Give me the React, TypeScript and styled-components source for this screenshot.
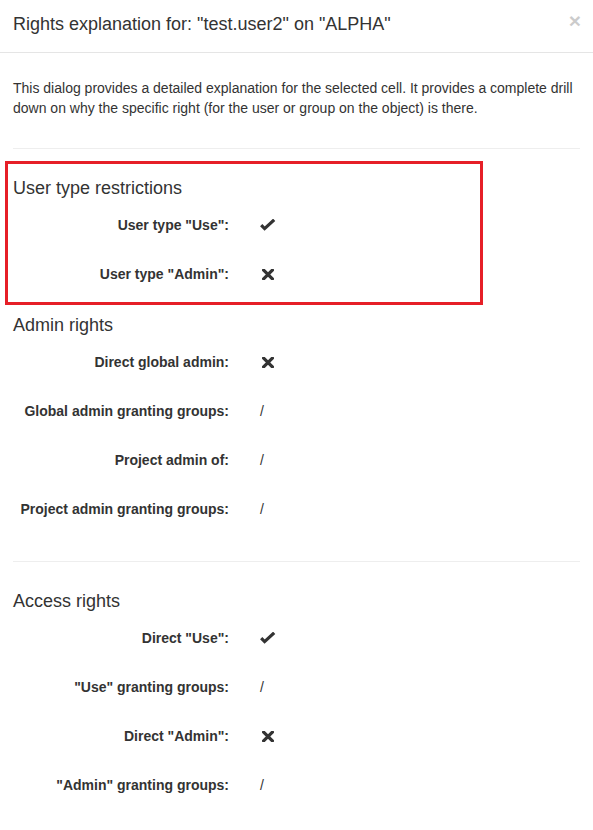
import React from "react";
import styled, { createGlobalStyle } from "styled-components";

const GlobalStyle = createGlobalStyle`
    body {
        margin: 0;
        background: #fff;
        color: #333;
        font-family: "Liberation Sans", Arial, Helvetica, sans-serif;
        font-size: 14px;
        line-height: 20px;
    }
`;

const Modal = styled.div`
    width: 593px;
`;

const Header = styled.header`
    display: flex;
    justify-content: space-between;
    align-items: flex-start;
    padding: 11px 13px 15px 13px;
    border-bottom: 1px solid #e5e5e5;
`;

const Title = styled.h4`
    margin: 0;
    font-size: 18px;
    font-weight: 500;
    line-height: 26px;
`;

const Close = styled.button`
    margin-top: -1px;
    margin-right: -1px;
    padding: 0;
    border: 0;
    background: transparent;
    color: #000;
    opacity: 0.2;
    font-family: "Liberation Sans", Arial, sans-serif;
    font-size: 21px;
    font-weight: bold;
    line-height: 21px;
    cursor: pointer;
`;

const Body = styled.div`
    display: flex;
    flex-direction: column;
    padding: 25px 13px 0 13px;
`;

const Intro = styled.p`
    margin: 0 0 10px;
`;

const Divider = styled.hr`
    width: 100%;
    margin: 20px 0;
    border: 0;
    border-top: 1px solid #eee;
`;

const Section = styled.section<{ $highlight?: boolean }>`
    position: relative;
    display: flex;
    flex-direction: column;
    padding-top: 9px;

    ${({ $highlight }) =>
        $highlight &&
        `
        &::after {
            content: "";
            position: absolute;
            top: -8px;
            left: -8px;
            right: 97px;
            bottom: 1px;
            border: 3px solid #e61f27;
            pointer-events: none;
        }
    `}
`;

const SectionTitle = styled.h4`
    margin: 0 0 10px;
    font-size: 18px;
    font-weight: 500;
    line-height: 20px;
`;

const Row = styled.div`
    display: grid;
    grid-template-columns: 231px 1fr;
    min-height: 34px;
    margin-bottom: 15px;
`;

const Label = styled.label`
    padding: 7px 15px 0 0;
    text-align: right;
    font-weight: bold;
`;

const Value = styled.div`
    display: flex;
    align-items: center;
    height: 20px;
    padding: 7px 0 0 16px;
`;

const Glyph = styled.svg`
    display: block;
    fill: none;
    stroke: #333;
`;

const CheckIcon = () => (
    <Glyph width="16" height="12" viewBox="0 0 16 12">
        <polyline points="1.2,6.2 4.6,9.6 14.2,0.8" strokeWidth="3.2" strokeLinejoin="miter" />
    </Glyph>
);

const CrossIcon = () => (
    <Glyph width="12" height="11" viewBox="0 0 12 11" style={{ marginLeft: 2 }}>
        <path d="M1.6 1.1 L10.4 9.9 M10.4 1.1 L1.6 9.9" strokeWidth="3.2" strokeLinecap="square" />
    </Glyph>
);

type Right = "yes" | "no" | "none";

interface Item {
    label: string;
    value: Right;
}

interface Group {
    title: string;
    items: Item[];
    highlight?: boolean;
    divider?: boolean;
}

const groups: Group[] = [
    {
        title: "User type restrictions",
        highlight: true,
        items: [
            { label: 'User type "Use":', value: "yes" },
            { label: 'User type "Admin":', value: "no" },
        ],
    },
    {
        title: "Admin rights",
        items: [
            { label: "Direct global admin:", value: "no" },
            { label: "Global admin granting groups:", value: "none" },
            { label: "Project admin of:", value: "none" },
            { label: "Project admin granting groups:", value: "none" },
        ],
    },
    {
        title: "Access rights",
        divider: true,
        items: [
            { label: 'Direct "Use":', value: "yes" },
            { label: '"Use" granting groups:', value: "none" },
            { label: 'Direct "Admin":', value: "no" },
            { label: '"Admin" granting groups:', value: "none" },
        ],
    },
];

function renderValue(value: Right) {
    if (value === "yes") return <CheckIcon />;
    if (value === "no") return <CrossIcon />;
    return "/";
}

const App: React.FC = () => {
    return (
        <Modal>
            <GlobalStyle />
            <Header>
                <Title>Rights explanation for: "test.user2" on "ALPHA"</Title>
                <Close aria-label="Close">×</Close>
            </Header>
            <Body>
                <Intro>
                    This dialog provides a detailed explanation for the selected cell. It
                    provides a complete drill down on why the specific right (for the user or
                    group on the object) is there.
                </Intro>
                <Divider />
                {groups.map((group) => (
                    <React.Fragment key={group.title}>
                        {group.divider && <Divider />}
                        <Section $highlight={group.highlight}>
                            <SectionTitle>{group.title}</SectionTitle>
                            {group.items.map((item) => (
                                <Row key={item.label}>
                                    <Label>{item.label}</Label>
                                    <Value>{renderValue(item.value)}</Value>
                                </Row>
                            ))}
                        </Section>
                    </React.Fragment>
                ))}
            </Body>
        </Modal>
    );
};

export default App;
